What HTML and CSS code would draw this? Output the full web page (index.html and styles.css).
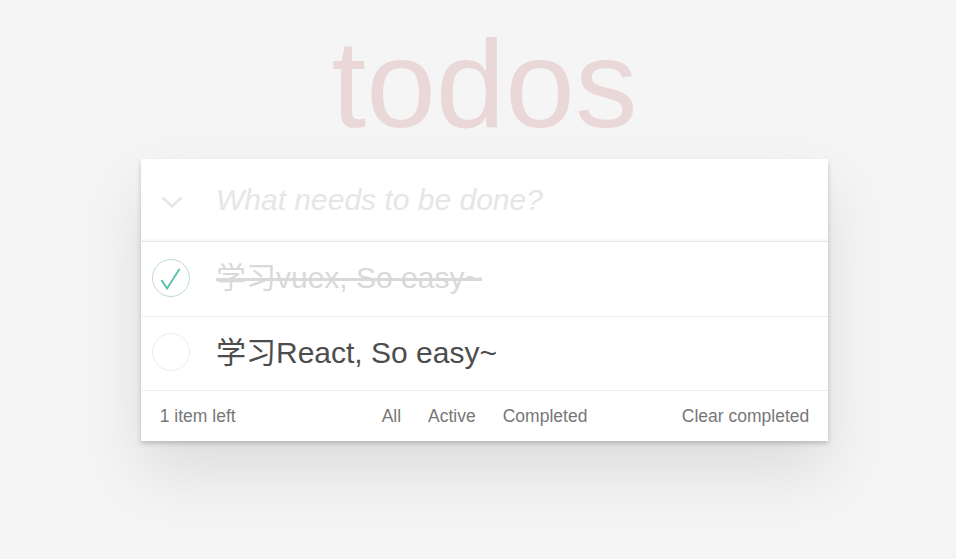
FILE: index.html
```html
<!DOCTYPE html>
<html lang="zh">
<head>
<meta charset="utf-8">
<title>todos</title>
<link rel="stylesheet" href="styles.css">
</head>
<body>
<section class="todoapp">
  <h1 class="title">todos</h1>
  <div class="card">
    <header class="header">
      <span class="toggle-all">
        <svg width="22" height="13" viewBox="0 0 22 13"><path d="M1.5 1.5 L11 10.5 L20.5 1.5" fill="none" stroke="#e6e6e6" stroke-width="2.6"/></svg>
      </span>
      <span class="new-todo">What needs to be done?</span>
    </header>
    <ul class="todo-list">
      <li class="todo completed">
        <span class="toggle">
          <svg width="40" height="40" viewBox="0 0 40 40"><circle cx="20" cy="20" r="18.5" fill="none" stroke="#bddad5" stroke-width="1"/><path d="M10.5 22 L16 30.5 L28.5 11" fill="none" stroke="#5dc2af" stroke-width="2"/></svg>
        </span>
        <label class="label">学习vuex, So easy~</label>
      </li>
      <li class="todo">
        <span class="toggle">
          <svg width="40" height="40" viewBox="0 0 40 40"><circle cx="20" cy="20" r="18.5" fill="none" stroke="#ededed" stroke-width="1"/></svg>
        </span>
        <label class="label">学习React, So easy~</label>
      </li>
    </ul>
    <footer class="footer">
      <span class="count">1 item left</span>
      <ul class="filters">
        <li><a class="filter">All</a></li>
        <li><a class="filter">Active</a></li>
        <li><a class="filter">Completed</a></li>
      </ul>
      <span class="clear">Clear completed</span>
    </footer>
  </div>
</section>
</body>
</html>
```
FILE: styles.css
```css
html, body {
  margin: 0;
  padding: 0;
}
body {
  background: #f5f5f5;
  font-family: "Liberation Sans", Arial, "Noto Sans CJK SC", sans-serif;
  color: #4d4d4d;
  padding: 21px 0 120px 13px;
}
.todoapp {
  width: 687px;
  margin: 0 auto;
}
.title {
  margin: 0 0 13px;
  font-size: 125px;
  line-height: 125px;
  font-weight: 100;
  text-align: center;
  color: rgba(175, 47, 47, 0.15);
}
.card {
  background: #fff;
  box-shadow: 0 2.5px 5px rgba(0, 0, 0, 0.2), 0 31px 62px rgba(0, 0, 0, 0.1);
}
.header {
  display: flex;
  align-items: center;
  height: 82px;
  box-sizing: border-box;
  box-shadow: inset 0 -2px 1px rgba(0, 0, 0, 0.03);
}
.toggle-all {
  width: 75px;
  flex: none;
  display: flex;
  padding-left: 20px;
  padding-top: 4px;
  box-sizing: border-box;
}
.toggle-all svg {
  display: block;
}
.new-todo {
  font-size: 30px;
  font-style: italic;
  color: #e6e6e6;
  line-height: 42px;
}
.todo-list {
  list-style: none;
  margin: 0;
  padding: 0;
  border-top: 1px solid #e6e6e6;
}
.todo {
  display: flex;
  align-items: center;
  height: 74.5px;
  box-sizing: border-box;
  border-bottom: 1px solid #ededed;
}
.toggle {
  width: 75px;
  flex: none;
  padding-left: 9.5px;
  padding-bottom: 2px;
  box-sizing: border-box;
  display: flex;
}
.toggle svg {
  display: block;
}
.label {
  font-size: 30px;
  line-height: 36px;
  height: 36px;
  padding-right: 18.75px;
  color: #4d4d4d;
  margin-top: -1px;
}
.completed .label {
  color: #d9d9d9;
  text-decoration: line-through;
}
.footer {
  display: grid;
  grid-template-columns: 1fr auto 1fr;
  align-items: center;
  height: 50px;
  box-sizing: border-box;
  padding: 0 18.75px;
  color: #777;
  font-size: 17.5px;
}
.count {
  justify-self: start;
}
.filters {
  list-style: none;
  margin: 0;
  padding: 0;
  display: flex;
}
.filter {
  display: block;
  padding: 3.75px 8.75px;
  margin: 3.75px;
  border: 1.25px solid transparent;
  border-radius: 3.75px;
  color: inherit;
}
.clear {
  justify-self: end;
}
```
